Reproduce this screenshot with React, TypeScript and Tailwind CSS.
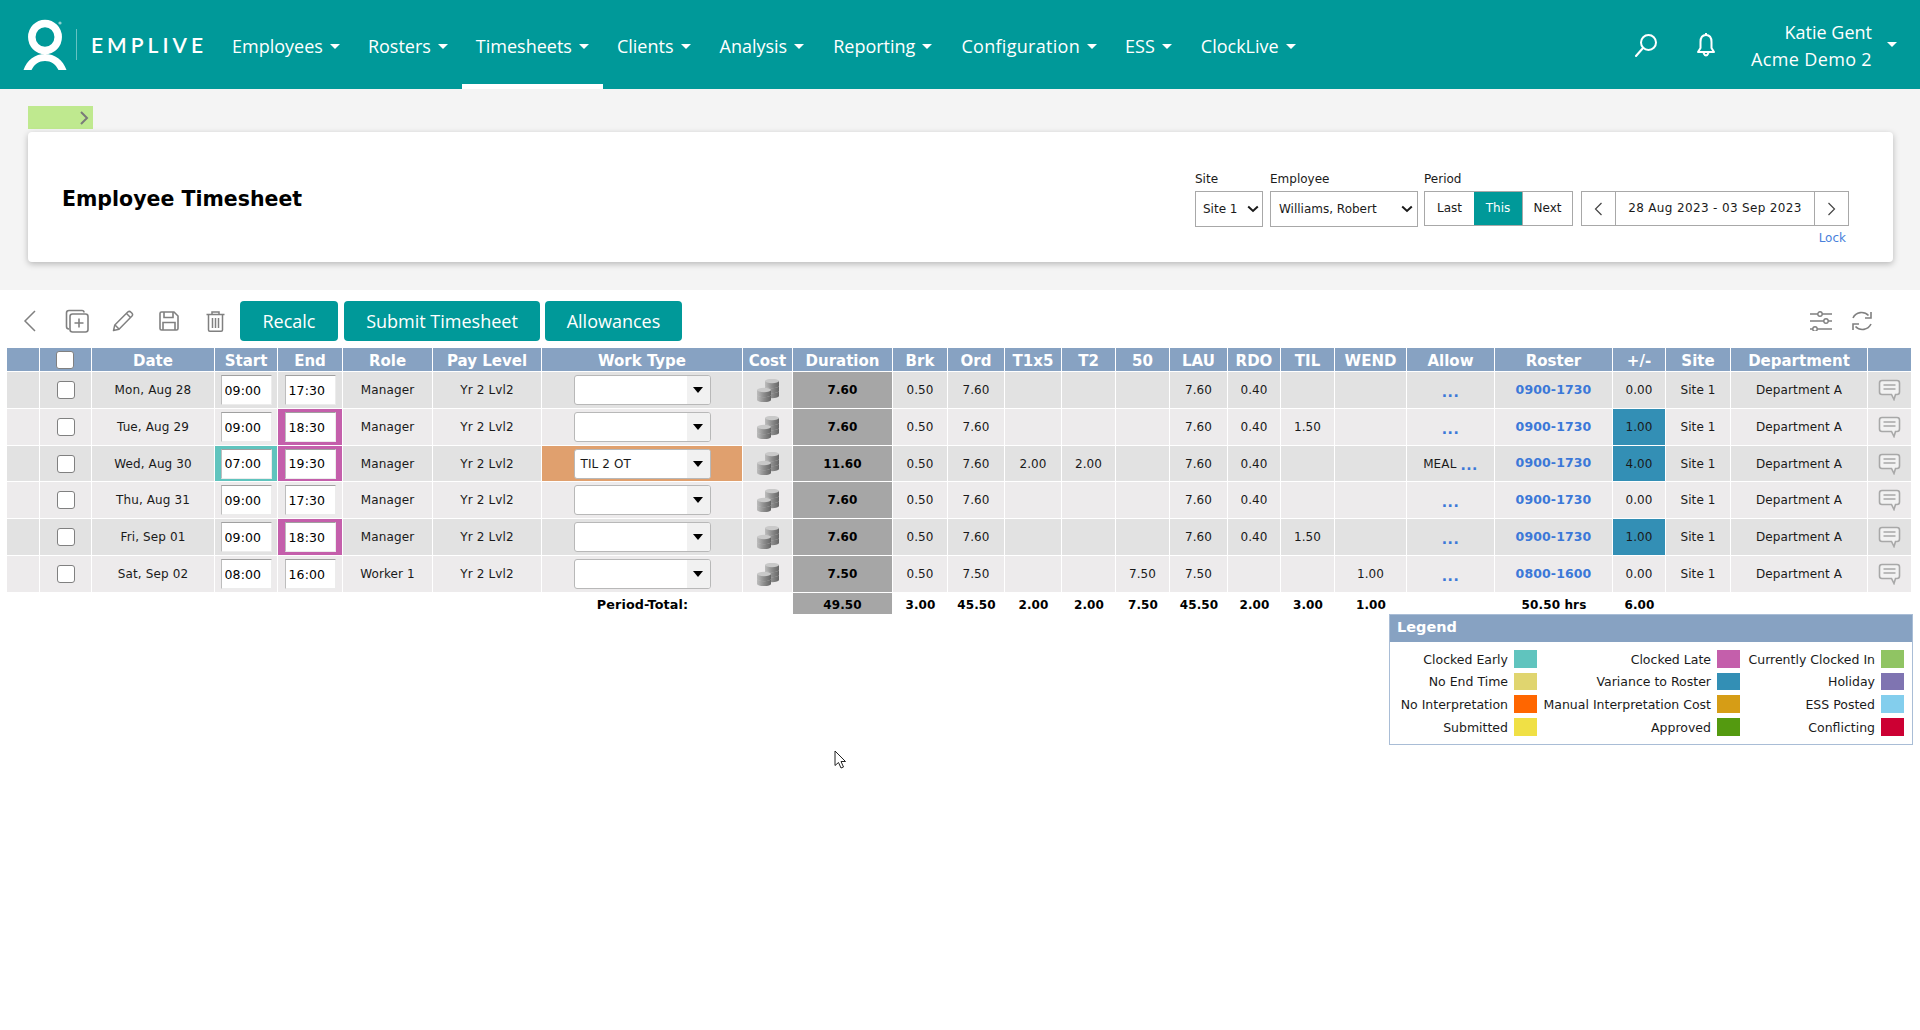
import React from "react";

const nav: [string, string][] = [
  ["Employees", ""],
  ["Rosters", ""],
  ["Timesheets", ""],
  ["Clients", "mr-px"],
  ["Analysis", "mr-px"],
  ["Reporting", "mr-px"],
  ["Configuration", "tracking-[0.3px]"],
  ["ESS", "mr-px"],
  ["ClockLive", ""],
];

const colWidths = [33, 52, 123, 63, 65, 90, 109, 201, 50, 100, 55, 57, 57, 54, 54, 58, 53, 54, 72, 88, 118, 53, 65, 137, 44];
const headers = ["", "", "Date", "Start", "End", "Role", "Pay Level", "Work Type", "Cost", "Duration", "Brk", "Ord", "T1x5", "T2", "50", "LAU", "RDO", "TIL", "WEND", "Allow", "Roster", "+/-", "Site", "Department", ""];

type Row = {
  h: string; bg: string; date: string; start: string; end: string; startBg?: string; endBg?: string; role: string; work?: string;
  dur: string; ord: string; t1?: string; t2?: string; f50?: string; lau: string; rdo?: string; til?: string; wend?: string; meal?: boolean; roster: string; diff: string; hi?: boolean;
};

const rows: Row[] = [
  { h: "h-[37px]", bg: "bg-[#e2e2e2]", date: "Mon, Aug 28", start: "09:00", end: "17:30", role: "Manager", dur: "7.60", ord: "7.60", lau: "7.60", rdo: "0.40", roster: "0900-1730", diff: "0.00" },
  { h: "h-[37px]", bg: "bg-[#edebec]", date: "Tue, Aug 29", start: "09:00", end: "18:30", endBg: "bg-[#c45fab]", role: "Manager", dur: "7.60", ord: "7.60", lau: "7.60", rdo: "0.40", til: "1.50", roster: "0900-1730", diff: "1.00", hi: true },
  { h: "h-[36px]", bg: "bg-[#e2e2e2]", date: "Wed, Aug 30", start: "07:00", end: "19:30", startBg: "bg-[#60c4be]", endBg: "bg-[#c45fab]", role: "Manager", work: "TIL 2 OT", dur: "11.60", ord: "7.60", t1: "2.00", t2: "2.00", lau: "7.60", rdo: "0.40", meal: true, roster: "0900-1730", diff: "4.00", hi: true },
  { h: "h-[37px]", bg: "bg-[#edebec]", date: "Thu, Aug 31", start: "09:00", end: "17:30", role: "Manager", dur: "7.60", ord: "7.60", lau: "7.60", rdo: "0.40", roster: "0900-1730", diff: "0.00" },
  { h: "h-[37px]", bg: "bg-[#e2e2e2]", date: "Fri, Sep 01", start: "09:00", end: "18:30", endBg: "bg-[#c45fab]", role: "Manager", dur: "7.60", ord: "7.60", lau: "7.60", rdo: "0.40", til: "1.50", roster: "0900-1730", diff: "1.00", hi: true },
  { h: "h-[37px]", bg: "bg-[#edebec]", date: "Sat, Sep 02", start: "08:00", end: "16:00", role: "Worker 1", dur: "7.50", ord: "7.50", f50: "7.50", lau: "7.50", wend: "1.00", roster: "0800-1600", diff: "0.00" },
];

const totals = ["", "", "", "", "", "", "", "Period-Total:", "", "49.50", "3.00", "45.50", "2.00", "2.00", "7.50", "45.50", "2.00", "3.00", "1.00", "", "50.50 hrs", "6.00", "", "", ""];

const legend = [
  ["Clocked Early", "bg-[#60c4be]", "Clocked Late", "bg-[#c45fab]", "Currently Clocked In", "bg-[#90c463]", "h-[18px]"],
  ["No End Time", "bg-[#e0d56f]", "Variance to Roster", "bg-[#338fb5]", "Holiday", "bg-[#7f74b1]", "h-[17px]"],
  ["No Interpretation", "bg-[#ff6600]", "Manual Interpretation Cost", "bg-[#d69d16]", "ESS Posted", "bg-[#83ceed]", "h-[18px]"],
  ["Submitted", "bg-[#f0e045]", "Approved", "bg-[#549a10]", "Conflicting", "bg-[#cc0033]", "h-[18px]"],
];

function Caret({ className = "" }: { className?: string }) {
  return <span className={"inline-block w-0 h-0 border-x-[5px] border-t-[5px] border-x-transparent border-t-white " + className} />;
}

function Logo() {
  return (
    <svg width="48" height="54" viewBox="0 0 48 54" className="shrink-0">
      <ellipse cx="23" cy="19" rx="13.2" ry="13.6" fill="none" stroke="#fff" strokeWidth="7.5" />
      <circle cx="38" cy="5" r="1.6" fill="#8fd0d0" />
      <path d="M1.5 52 C5 42 13 36 23 36 C33 36 41 42 44.5 52 L36.5 52 C33.5 46 29 43 23 43 C17 43 12.5 46 9.5 52 Z" fill="#fff" />
    </svg>
  );
}

function Coins() {
  const cyl = (x: number, y: number, w: number) => (
    <g key={x + "-" + y}>
      <rect x={x} y={y + 2} width={w} height="5" fill="url(#coinGrad)" />
      <ellipse cx={x + w / 2} cy={y + 7} rx={w / 2} ry="2.2" fill="url(#coinGrad)" />
      <ellipse cx={x + w / 2} cy={y + 2} rx={w / 2} ry="2.2" fill="#c9c9c9" />
    </g>
  );
  return (
    <svg width="22" height="23" viewBox="0 0 22 23" className="mx-auto block">
      <defs>
        <linearGradient id="coinGrad" x1="0" x2="1" y1="0" y2="0">
          <stop offset="0" stopColor="#bdbdbd" />
          <stop offset="0.5" stopColor="#8c8c8c" />
          <stop offset="1" stopColor="#666" />
        </linearGradient>
      </defs>
      {[10, 5, 0].map((y) => cyl(8, y, 14))}
      {[14, 9].map((y) => cyl(0, y, 14))}
    </svg>
  );
}

function Comment() {
  return (
    <svg width="23" height="22" viewBox="0 0 23 22" className="mx-auto block">
      <path d="M4 1.5 H19 Q21.5 1.5 21.5 4 V13 Q21.5 15.5 19 15.5 H17.5 L16 20.5 L13.5 15.5 H4 Q1.5 15.5 1.5 13 V4 Q1.5 1.5 4 1.5 Z" fill="#f2f2f2" stroke="#a8a8a8" strokeWidth="1.6" />
      <path d="M5.5 6 H17.5 M5.5 10 H17.5" stroke="#a8a8a8" strokeWidth="1.4" />
    </svg>
  );
}

function Down() {
  return (
    <svg width="12" height="8" viewBox="0 0 12 8" className="shrink-0">
      <path d="M1.2 1.5 L6 6 L10.8 1.5" fill="none" stroke="#1a1a1a" strokeWidth="2" />
    </svg>
  );
}

function WorkSelect({ value }: { value?: string }) {
  return (
    <div className="mx-auto flex h-[30px] w-[137px] items-stretch overflow-hidden rounded-[3px] border border-[#b8b8b8] bg-white">
      <span className="flex-1 pl-[6px] text-left leading-[28px]">{value}</span>
      <span className="flex w-[23px] items-center justify-center bg-[#f1f1f1]">
        <span className="inline-block h-0 w-0 border-x-[5px] border-t-[6px] border-x-transparent border-t-black" />
      </span>
    </div>
  );
}

function TimeInput({ value }: { value: string }) {
  return (
    <input
      readOnly
      value={value}
      className="mx-auto block h-[30px] w-[51px] border border-t-[#a0a0a0] border-l-[#bdbdbd] border-r-[#ececec] border-b-[#ececec] bg-white pl-[3px] text-[12.5px] text-black outline-none"
    />
  );
}

function Dots() {
  return <span className="relative top-[2px] text-[14px] font-bold tracking-[0.5px] text-[#3b78d8]">...</span>;
}

const td = "border-r border-b border-white p-0 text-center align-middle";

export default function App() {
  return (
    <div className="relative min-h-[1030px] w-full overflow-hidden bg-white font-['DejaVu_Sans',sans-serif] text-[12px] text-[#1a1a1a]">
      <header className="flex h-[89px] items-center bg-[#009999] pr-[23px] font-['Open_Sans',sans-serif] text-[18px] text-white">
        <div className="flex h-full w-[218px] shrink-0 items-center pl-[22px]">
          <Logo />
          <span className="ml-[6px] h-[31px] w-px bg-white/40" />
          <span className="ml-[14px] font-['Lato',sans-serif] text-[21px] font-semibold tracking-[4px]">EMPLIVE</span>
        </div>
        <nav className="flex h-full">
          {nav.map(([n, extra]) => (
            <a
              key={n}
              className={
                "flex h-full items-center gap-[7px] px-[14px] " +
                extra +
                " " +
                (n === "Timesheets" ? "border-b-[5px] border-white pt-[8px]" : "pt-[3px]")
              }
            >
              {n}
              <Caret />
            </a>
          ))}
        </nav>
        <svg width="24" height="24" viewBox="0 0 24 24" className="ml-auto" fill="none" stroke="#fff" strokeWidth="2">
          <circle cx="14.5" cy="9.5" r="7.5" />
          <path d="M9 15 L2 23" strokeLinecap="round" />
        </svg>
        <svg width="24" height="26" viewBox="0 0 24 26" className="ml-[36px]" fill="none" stroke="#fff" strokeWidth="2">
          <path d="M12 3 C7.5 3 6.5 7 6.5 10 V16 L4 20 H20 L17.5 16 V10 C17.5 7 16.5 3 12 3 Z" strokeLinejoin="round" />
          <path d="M12 1 V3" />
          <path d="M9.5 21 Q12 26 14.5 21" />
        </svg>
        <div className="w-[154px] pt-[2px] text-right leading-[27px]">
          <div>Katie Gent</div>
          <div className="tracking-[0.35px]">Acme Demo 2</div>
        </div>
        <Caret className="ml-[15px]" />
      </header>

      <section className="h-[201px] bg-[#f4f4f4] pt-[17px]">
        <div className="ml-[28px] flex h-[23px] w-[65px] items-center justify-end bg-[#bfe98f] pr-[4px]">
          <svg width="10" height="14" viewBox="0 0 10 14" fill="none" stroke="#7a7a7a" strokeWidth="2">
            <path d="M2 1 L8 7 L2 13" />
          </svg>
        </div>
        <div className="ml-[28px] mr-[27px] mt-[3px] flex h-[130px] justify-between rounded-[4px] bg-white pl-[34px] pr-[44px] shadow-[0_2px_6px_rgba(0,0,0,0.25)]">
          <h1 className="mt-[53px] text-[20.5px] font-bold leading-[28px] text-black">Employee Timesheet</h1>
          <div className="mt-[38px] flex items-start">
            <div className="w-[68px]">
              <div className="h-[21px] leading-[19px]">Site</div>
              <div className="flex h-[36px] items-center justify-between border border-[#a8a8a8] pl-[7px] pr-[3px]">
                <span>Site 1</span>
                <Down />
              </div>
            </div>
            <div className="ml-[7px] w-[148px]">
              <div className="h-[21px] leading-[19px]">Employee</div>
              <div className="flex h-[36px] items-center justify-between border border-[#a8a8a8] pl-[8px] pr-[4px]">
                <span>Williams, Robert</span>
                <Down />
              </div>
            </div>
            <div className="ml-[6px] w-[149px]">
              <div className="h-[21px] leading-[19px]">Period</div>
              <div className="flex h-[35px] items-stretch border border-[#a8a8a8] text-center leading-[33px]">
                <span className="w-[49px]">Last</span>
                <span className="w-[48px] bg-[#009999] text-white">This</span>
                <span className="flex-1 border-l border-[#a8a8a8]">Next</span>
              </div>
            </div>
            <div className="ml-[8px] w-[268px]">
              <div className="h-[21px]" />
              <div className="flex h-[35px] items-stretch border border-[#a8a8a8] text-center leading-[33px]">
                <span className="flex w-[34px] items-center justify-center border-r border-[#a8a8a8]">
                  <svg width="9" height="14" viewBox="0 0 9 14" fill="none" stroke="#444" strokeWidth="1.2"><path d="M7.5 1 L1.5 7 L7.5 13" /></svg>
                </span>
                <span className="flex-1 tracking-[0.35px]">28 Aug 2023 - 03 Sep 2023</span>
                <span className="flex w-[34px] items-center justify-center border-l border-[#a8a8a8]">
                  <svg width="9" height="14" viewBox="0 0 9 14" fill="none" stroke="#444" strokeWidth="1.2"><path d="M1.5 1 L7.5 7 L1.5 13" /></svg>
                </span>
              </div>
              <div className="mt-[3px] pr-[3px] text-right leading-[18px] text-[#4a7fdb]">Lock</div>
            </div>
          </div>
        </div>
      </section>

      <div className="flex h-[58px] items-start pt-[11px]">
        <div className="flex h-[40px] items-center text-[#808080]">
          <svg width="13" height="22" viewBox="0 0 13 22" className="ml-[23px]" fill="none" stroke="#808080" strokeWidth="1.5"><path d="M12 1 L2 11 L12 21" /></svg>
          <svg width="24" height="24" viewBox="0 0 24 24" className="ml-[29px]" fill="none" stroke="#808080" strokeWidth="1.6">
            <path d="M4 20 Q1.5 20 1.5 17.5 V4 Q1.5 1.5 4 1.5 H17 Q19 1.5 19 3.5" />
            <rect x="5" y="5" width="18" height="18" rx="2.5" />
            <path d="M14 9.5 V18.5 M9.5 14 H18.5" />
          </svg>
          <svg width="22" height="22" viewBox="0 0 22 22" className="ml-[23px]" fill="none" stroke="#808080" strokeWidth="1.5">
            <path d="M1.5 20.5 L2.8 15 L16 1.8 Q17.5 0.8 19 2.2 L20 3.2 Q21.2 4.6 20 6 L7 19.2 Z" strokeLinejoin="round" />
            <path d="M14.5 3.5 L18.5 7.5 M3 15 L7 19" />
          </svg>
          <svg width="20" height="20" viewBox="0 0 20 20" className="ml-[25px]" fill="none" stroke="#808080" strokeWidth="1.6">
            <path d="M1 2.5 Q1 1 2.5 1 H15 L19 5 V17.5 Q19 19 17.5 19 H2.5 Q1 19 1 17.5 Z" />
            <path d="M5 1 V6.5 H14 V1 M4 19 V11.5 H16 V19" />
          </svg>
          <svg width="19" height="21" viewBox="0 0 19 21" className="ml-[27px]" fill="none" stroke="#808080" strokeWidth="1.5">
            <path d="M0.5 3.5 H18.5 M6 3 V1 H13 V3" />
            <path d="M2.5 4 V19 Q2.5 20.2 3.8 20.2 H15.2 Q16.5 20.2 16.5 19 V4" />
            <path d="M6.5 7 V17 M9.5 7 V17 M12.5 7 V17" />
          </svg>
        </div>
        <div className="ml-[15px] flex gap-[5px] font-['Open_Sans',sans-serif] text-[18px] text-white">
          <button className="mr-px h-[40px] w-[98px] rounded-[4px] bg-[#009999]">Recalc</button>
          <button className="h-[40px] w-[196px] rounded-[4px] bg-[#009999]">Submit Timesheet</button>
          <button className="h-[40px] w-[137px] rounded-[4px] bg-[#009999]">Allowances</button>
        </div>
        <div className="ml-auto flex h-[40px] items-center gap-[19px] pr-[47px]">
          <svg width="22" height="20" viewBox="0 0 22 20" fill="none" stroke="#808080" strokeWidth="1.4">
            <path d="M0 3 H22 M0 10 H22 M0 18 H22" />
            <circle cx="10" cy="3" r="2.2" fill="#fff" />
            <circle cx="16" cy="10" r="2.2" fill="#fff" />
            <circle cx="5" cy="18" r="2.2" fill="#fff" />
          </svg>
          <svg width="22" height="22" viewBox="0 0 22 22" fill="none" stroke="#808080" strokeWidth="1.6">
            <path d="M2 8 A9.5 9.5 0 0 1 17.5 5.5" />
            <path d="M20 2 V8 H14" />
            <path d="M20 14 A9.5 9.5 0 0 1 4.5 16.5" />
            <path d="M2 20 V14 H8" />
          </svg>
        </div>
      </div>

      <div className="pl-[7px]">
        <table className="w-[1905px] table-fixed border-separate border-spacing-0">
          <colgroup>
            {colWidths.map((w, i) => (
              <col key={i} style={{ width: w }} />
            ))}
          </colgroup>
          <thead>
            <tr className="h-[24px] bg-[#87a2c2] text-[15px] font-bold leading-[20px] text-white">
              {headers.map((h, i) => (
                <th key={i} className={td + " pt-[2px] font-bold"}>
                  {i === 1 ? (
                    <span className="relative left-[-1px] top-[-1px] mx-auto block h-[18px] w-[18px] rounded-[3px] border border-[#808080] bg-white" />
                  ) : (
                    h
                  )}
                </th>
              ))}
            </tr>
          </thead>
          <tbody className="tracking-[0.12px]">
            {rows.map((r) => (
              <tr key={r.date} className={r.h + " " + r.bg}>
                <td className={td} />
                <td className={td}>
                  <span className="mx-auto block h-[18px] w-[18px] rounded-[3px] border border-[#808080] bg-white" />
                </td>
                <td className={td}>{r.date}</td>
                <td className={td + " " + (r.startBg ?? "")}><TimeInput value={r.start} /></td>
                <td className={td + " " + (r.endBg ?? "")}><TimeInput value={r.end} /></td>
                <td className={td}>{r.role}</td>
                <td className={td}>Yr 2 Lvl2</td>
                <td className={td + " " + (r.work ? "bg-[#e0a06e]" : "")}><WorkSelect value={r.work} /></td>
                <td className={td}><Coins /></td>
                <td className={td + " bg-[#a6a6a6] font-bold text-black"}>{r.dur}</td>
                <td className={td}>0.50</td>
                <td className={td}>{r.ord}</td>
                <td className={td}>{r.t1}</td>
                <td className={td}>{r.t2}</td>
                <td className={td}>{r.f50}</td>
                <td className={td}>{r.lau}</td>
                <td className={td}>{r.rdo}</td>
                <td className={td}>{r.til}</td>
                <td className={td}>{r.wend}</td>
                <td className={td}>{r.meal ? "MEAL " : ""}<Dots /></td>
                <td className={td + " text-[12.5px] font-bold text-[#3b78d8]"}>{r.roster}</td>
                <td className={td + " " + (r.hi ? "bg-[#338fb5]" : "")}>{r.diff}</td>
                <td className={td}>Site 1</td>
                <td className={td}>Department A</td>
                <td className={td}><Comment /></td>
              </tr>
            ))}
            <tr className="h-[21px] font-bold leading-[18px] text-black">
              {totals.map((t, i) => (
                <td
                  key={i}
                  className={
                    "p-0 pt-[2px] text-center align-middle " +
                    (i === 9 ? "border-r border-white bg-[#a6a6a6] " : "") +
                    (i === 7 ? "text-[12.75px]" : "")
                  }
                >
                  {t}
                </td>
              ))}
            </tr>
          </tbody>
        </table>
      </div>

      <div className="flex justify-end pr-[7px]">
        <div className="w-[524px] border border-[#a9bdd6]">
          <div className="h-[27px] bg-[#87a2c2] pl-[7px] text-[14.5px] font-bold leading-[24px] text-white">Legend</div>
          <div className="grid grid-cols-[112px_23px_168px_23px_129px_23px] gap-x-[6px] gap-y-[5px] pb-[8px] pl-[6px] pt-[8px] text-[12.5px] leading-[17px]">
            {legend.map((l) => (
              <React.Fragment key={l[0]}>
                <span className="self-center justify-self-end whitespace-nowrap text-right">{l[0]}</span>
                <span className={l[1] + " " + l[6]} />
                <span className="self-center justify-self-end whitespace-nowrap text-right">{l[2]}</span>
                <span className={l[3] + " " + l[6]} />
                <span className="self-center justify-self-end whitespace-nowrap text-right">{l[4]}</span>
                <span className={l[5] + " " + l[6]} />
              </React.Fragment>
            ))}
          </div>
        </div>
      </div>

      <svg width="13" height="19" viewBox="0 0 13 19" className="absolute left-[834px] top-[750px]">
        <path d="M1 1 V15.5 L4.5 12.5 L7 18 L9.5 17 L7 11.5 H11.5 Z" fill="#fff" stroke="#222" strokeWidth="1" />
      </svg>
    </div>
  );
}
